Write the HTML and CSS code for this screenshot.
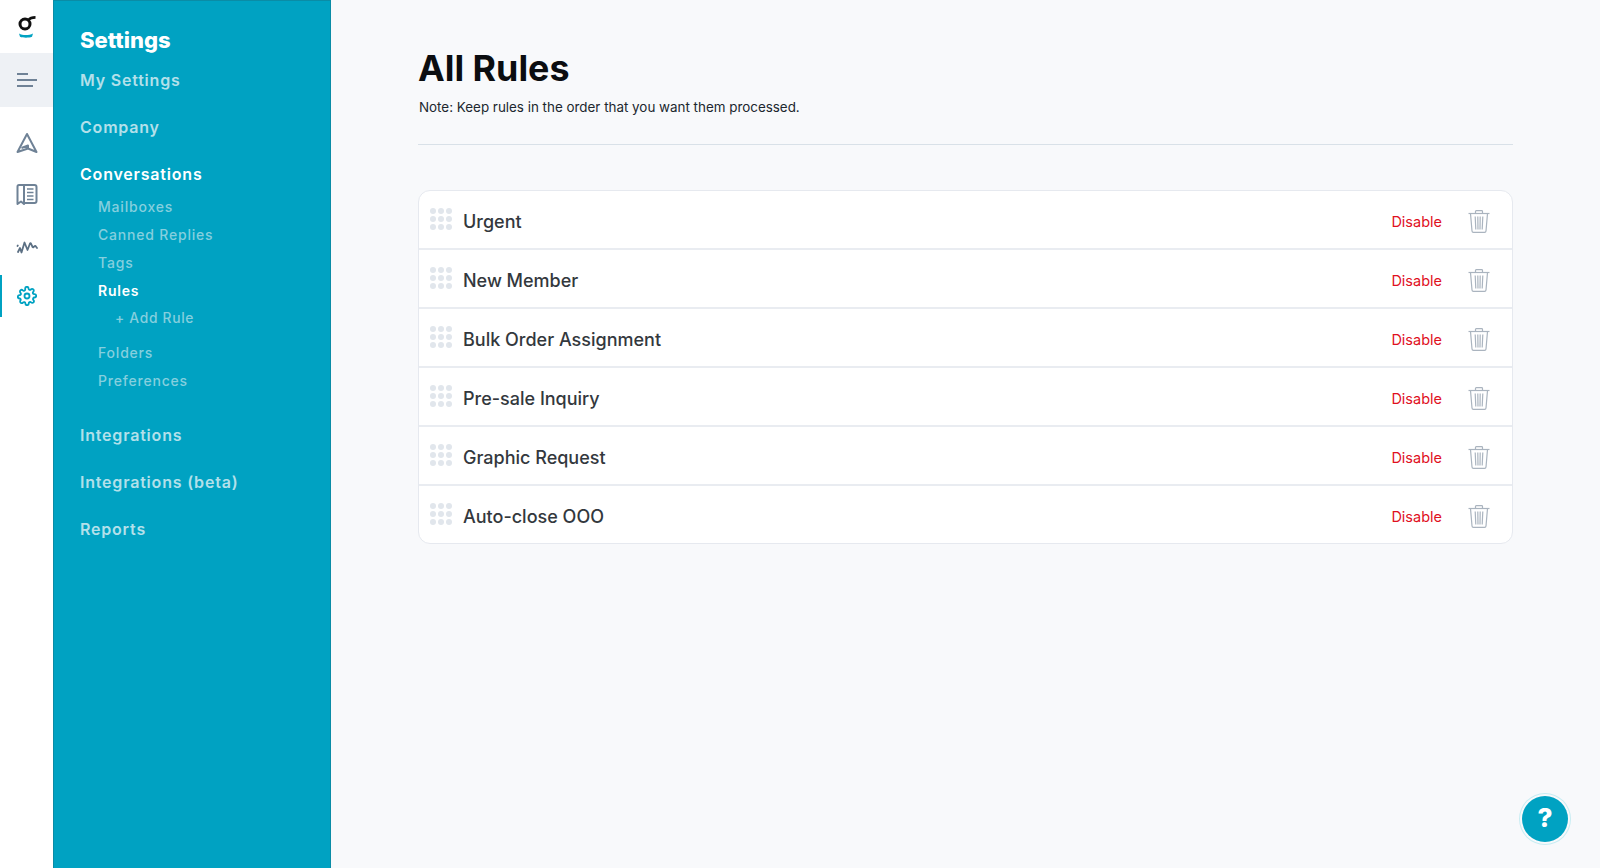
FILE: index.html
```html
<!DOCTYPE html>
<html lang="en">
<head>
  <meta charset="UTF-8" />
  <title>All Rules</title>
  <link rel="stylesheet" href="styles.css">
</head>
<body>

<div class="app">
  <nav class="rail">
    <a class="rail-logo" href="#">
      <svg width="20" height="26" viewBox="0 0 20 26" fill="none">
        <circle cx="8" cy="10" r="5" stroke="#111" stroke-width="3"/>
        <path d="M11.500 6 C13 4 15.500 3.400 18.500 3.400" stroke="#111" stroke-width="2.600"/>
        <path d="M2 19.500 C5.500 21.500 12 21.500 16 19.500 L15 22.800 C12 24 6 24 3 22.800 Z" fill="#00a2c2"/>
      </svg>
    </a>
    <a class="rail-toggle" href="#">
      <svg width="22" height="16" viewBox="0 0 22 16" fill="none" stroke="#6f8296" stroke-width="1.800">
        <path d="M1 2h11M1 8h20M1 14h16"/>
      </svg>
    </a>
    <div class="rail-icons">
      <a class="rail-icon" href="#">
        <svg width="22" height="22" viewBox="0 0 22 22" fill="none" stroke="#6f8296" stroke-width="2" stroke-linejoin="round">
          <path d="M11 2 L20.500 20 L12 16.500 L1.500 20 Z"/>
          <path d="M5.500 16 L12 13.500 L12 16.500"/>
        </svg>
      </a>
      <a class="rail-icon" href="#">
        <svg width="22" height="22" viewBox="0 0 22 22" fill="none" stroke="#6f8296" stroke-width="2" stroke-linejoin="round">
          <path d="M8 2 H18.500 Q20.500 2 20.500 4 V18 Q20.500 20 18.500 20 H8 Z"/>
          <path d="M8 2 H3 Q1.500 2 1.500 3.500 V21 L5 18.500 L8 21 Z"/>
          <path d="M11 6h6.500M11 9.500h6.500M11 13h6.500M11 16.500h6.500" stroke-width="1.400"/>
        </svg>
      </a>
      <a class="rail-icon" href="#">
        <svg class="pulse" width="22" height="14" viewBox="0 0 22 14" fill="none" stroke="#5c7084" stroke-width="1.800" stroke-linecap="round" stroke-linejoin="round">
          <path d="M1.500 6 L1.800 5.500"/>
          <path d="M2 12 L4 8 L5.500 12.500 L8.500 2.500 L11.500 10 L14 3.500 C15 2.500 15.500 4.500 16.500 7 C17.500 8.500 18.500 5 19.500 6 L21 8"/>
        </svg>
      </a>
      <a class="rail-icon active" href="#">
        <svg width="20" height="20" viewBox="0 0 24 24" fill="none" stroke="#00a2c2" stroke-width="2.200" stroke-linejoin="round">
          <circle cx="12" cy="12" r="3"/>
          <path d="M19.400 15a1.650 1.650 0 0 0 .33 1.820l.06.06a2 2 0 1 1-2.830 2.830l-.06-.06a1.650 1.650 0 0 0-2.820 1.170V21a2 2 0 1 1-4 0v-.09a1.650 1.650 0 0 0-2.820-1.100l-.06.06a2 2 0 1 1-2.830-2.830l.06-.06A1.650 1.650 0 0 0 3.090 15H3a2 2 0 1 1 0-4h.09a1.650 1.650 0 0 0 1.100-2.820l-.06-.06a2 2 0 1 1 2.830-2.830l.06.06A1.650 1.650 0 0 0 9.840 4.180V3a2 2 0 1 1 4 0v.09a1.650 1.650 0 0 0 2.820 1.100l.06-.06a2 2 0 1 1 2.830 2.830l-.06.06a1.650 1.650 0 0 0 1.170 2.820H21a2 2 0 1 1 0 4h-.09a1.650 1.650 0 0 0-1.510 1z"/>
        </svg>
      </a>
    </div>
  </nav>

  <aside class="panel">
    <h2 class="panel-title">Settings</h2>
    <a class="panel-link" href="#">My Settings</a>
    <a class="panel-link" href="#">Company</a>
    <a class="panel-link current" href="#">Conversations</a>
    <div class="subnav">
      <a href="#">Mailboxes</a>
      <a href="#">Canned Replies</a>
      <a href="#">Tags</a>
      <a class="current" href="#">Rules</a>
      <a class="add-rule" href="#">+ Add Rule</a>
      <a class="after-add" href="#">Folders</a>
      <a href="#">Preferences</a>
    </div>
    <a class="panel-link" href="#">Integrations</a>
    <a class="panel-link" href="#">Integrations (beta)</a>
    <a class="panel-link" href="#">Reports</a>
  </aside>

  <main class="content">
    <h1>All Rules</h1>
    <p class="note">Note: Keep rules in the order that you want them processed.</p>
    <hr class="divider" />

    <ul class="rules" id="rules"></ul>
  </main>
</div>

<a class="help" href="#">?</a>

<template id="ruleRow">
  <li class="rule">
    <span class="grip"><i></i><i></i><i></i><i></i><i></i><i></i><i></i><i></i><i></i></span>
    <span class="rule-name"></span>
    <a class="disable" href="#">Disable</a>
    <a class="trash" href="#">
      <svg width="22" height="23" viewBox="0 0 22 23" fill="none" stroke="#aab4bf" stroke-width="1.200">
        <path d="M0.500 3.500 H21.500"/>
        <path d="M7.500 3.500 V1.500 Q7.500 0.700 8.300 0.700 H13.700 Q14.500 0.700 14.500 1.500 V3.500"/>
        <path d="M2.500 3.500 L4 21 Q4.100 22.300 5.400 22.300 H16.600 Q17.900 22.300 18 21 L19.500 3.500"/>
        <path d="M7.200 6.500 L7.800 19.500 M9.800 6.500 L10 19.500 M12.200 6.500 L12 19.500 M14.800 6.500 L14.200 19.500"/>
      </svg>
    </a>
  </li>
</template>

<script>
  const rules = ["Urgent", "New Member", "Bulk Order Assignment", "Pre-sale Inquiry", "Graphic Request", "Auto-close OOO"];
  const list = document.getElementById("rules");
  const tpl = document.getElementById("ruleRow");
  rules.forEach(name => {
    const row = tpl.content.cloneNode(true);
    row.querySelector(".rule-name").textContent = name;
    list.appendChild(row);
  });
</script>

</body>
</html>
```

FILE: styles.css
```css
html, body {
  height: 100%;
}
body {
  margin: 0;
  font-family: Inter, "Liberation Sans", sans-serif;
  background-color: #f8f9fb;
  overflow: hidden;
}
a {
  text-decoration: none;
  color: inherit;
}

.app {
  display: flex;
  height: 868px;
}

/* icon rail */
.rail {
  width: 53px;
  flex: none;
  background: #fff;
  display: flex;
  flex-direction: column;
}
.rail-logo {
  height: 53px;
  display: flex;
  align-items: center;
  justify-content: center;
}
.rail-toggle {
  height: 54px;
  background: #eef1f5;
  display: flex;
  align-items: center;
  justify-content: center;
}
.rail-icons {
  display: flex;
  flex-direction: column;
  gap: 9px;
  margin-top: 15px;
}
.rail-icon {
  height: 42px;
  display: flex;
  align-items: center;
  justify-content: center;
  border-left: 2px solid transparent;
  padding-right: 2px;
}
.rail-icon.active {
  border-left-color: #00a2c2;
}
.pulse {
  margin-top: 3px;
}

/* settings panel */
.panel {
  width: 278px;
  flex: none;
  box-sizing: border-box;
  background: #00a2c2;
  border-left: 1px solid #0a8ca6;
  border-right: 1px solid #0a8ca6;
  border-top: 1px solid #0a8ca6;
  padding: 25px 0 0 26px;
}
.panel-title {
  margin: 0 0 14px 0;
  font-size: 22px;
  line-height: 28px;
  font-weight: 800;
  color: #fff;
}
.panel-link {
  display: block;
  font-size: 16px;
  line-height: 24px;
  font-weight: 600;
  letter-spacing: 0.8px;
  color: #b3e0ea;
  margin-bottom: 23px;
}
.panel-link.current {
  color: #fff;
  margin-bottom: 7px;
}
.subnav {
  display: flex;
  flex-direction: column;
  padding-left: 18px;
  margin-bottom: 28px;
}
.subnav a {
  font-size: 14px;
  line-height: 28px;
  font-weight: 500;
  letter-spacing: 0.8px;
  color: #85cfde;
}
.subnav a.current {
  color: #fff;
  font-weight: 600;
}
.subnav a.add-rule {
  padding-left: 17px;
  line-height: 26px;
  font-size: 13.800px;
  letter-spacing: 0.7px;
}
.subnav a.after-add {
  margin-top: 8px;
}

/* main */
.content {
  flex: 1;
  padding: 44px 87px 0 87px;
}
h1 {
  margin: 0;
  font-size: 35.800px;
  line-height: 48px;
  font-weight: 700;
  color: #0b0d10;
}
.note {
  margin: 5px 0 0 1px;
  font-size: 13.400px;
  line-height: 20px;
  color: #20272e;
}
.divider {
  border: none;
  border-top: 1px solid #d9e1e8;
  margin: 27px 0 45px 0;
}

.rules {
  list-style: none;
  margin: 0;
  padding: 0;
  background: #fff;
  border: 1px solid #e6e9ef;
  border-radius: 12px;
}
.rule {
  height: 59px;
  box-sizing: border-box;
  display: flex;
  align-items: center;
  padding: 4px 22px 0 11px;
  border-bottom: 2px solid #e9ecf1;
}
.rule:last-child {
  border-bottom: none;
  height: 57px;
}
.grip {
  display: grid;
  grid-template-columns: repeat(3, 6px);
  gap: 2px;
  margin-right: 11px;
  margin-top: -5px;
}
.grip i {
  width: 6px;
  height: 6px;
  border-radius: 50%;
  background: #e1e6ec;
}
.rule-name {
  flex: 1;
  font-size: 18px;
  font-weight: 500;
  color: #33383d;
}
.disable {
  font-size: 14.500px;
  color: #e0101e;
  margin-right: 26px;
}
.trash {
  display: flex;
}

.help {
  position: absolute;
  left: 1522px;
  top: 796px;
  width: 46px;
  height: 43px;
  padding-bottom: 3px;
  border-radius: 50%;
  background: #00a2c2;
  box-shadow: 0 0 0 2px #f8f9fb, 0 0 0 3px #c8edf3;
  color: #fff;
  font-size: 26px;
  font-weight: 800;
  display: flex;
  align-items: center;
  justify-content: center;
}
```
